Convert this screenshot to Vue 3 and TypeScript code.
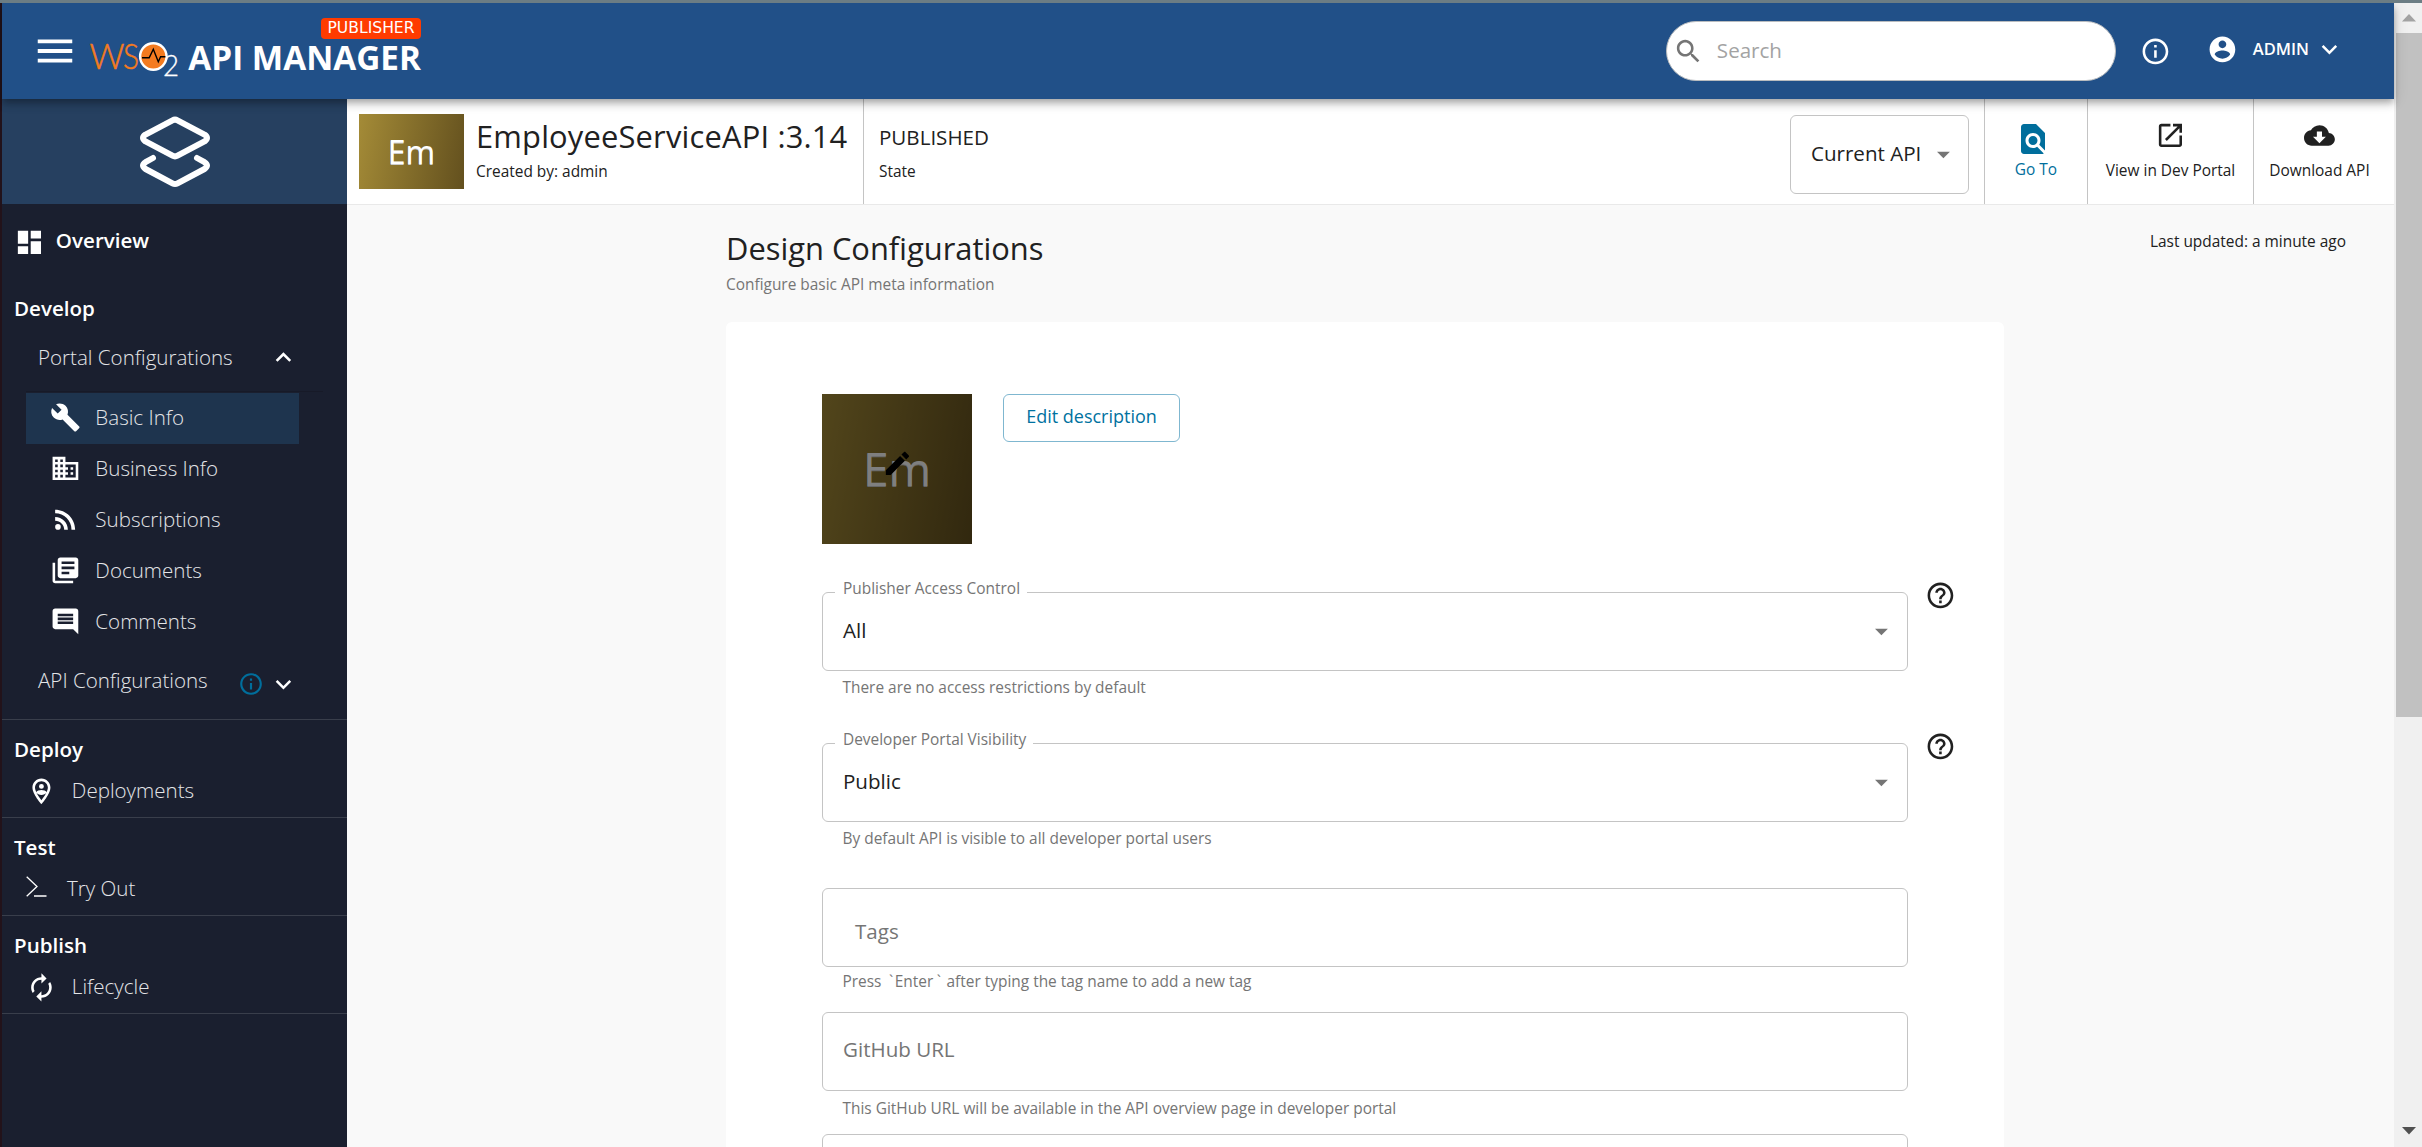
<script setup lang="ts">
interface NavItem {
  label: string
  icon: string
  active?: boolean
}

interface Section {
  key: string
  title: string
  label: string
  icon: string
}

interface Field {
  key: string
  label?: string
  value?: string
  placeholder?: string
  helper?: string
  select?: boolean
}

const icons: Record<string, string> = {
  wrench: 'M22.7 19l-9.1-9.1c.9-2.3.4-5-1.5-6.9-2-2-5-2.4-7.4-1.3L9 6 6 9 1.6 4.7C.4 7.1.9 10.1 2.9 12.1c1.9 1.9 4.6 2.4 6.9 1.5l9.1 9.1c.4.4 1 .4 1.4 0l2.3-2.3c.5-.4.5-1.1.1-1.4z',
  business: 'M12 7V3H2v18h20V7H12zM6 19H4v-2h2v2zm0-4H4v-2h2v2zm0-4H4V9h2v2zm0-4H4V5h2v2zm4 12H8v-2h2v2zm0-4H8v-2h2v2zm0-4H8V9h2v2zm0-4H8V5h2v2zm10 12h-8v-2h2v-2h-2v-2h2v-2h-2V9h8v10zm-2-8h-2v2h2v-2zm0 4h-2v2h2v-2z',
  rss: 'M6.18 15.64a2.18 2.18 0 1 1 0 4.36 2.18 2.18 0 0 1 0-4.36M4 4.44v2.83c7.03 0 12.73 5.7 12.73 12.73h2.83c0-8.59-6.97-15.56-15.56-15.56zm0 5.66v2.83c3.9 0 7.07 3.17 7.07 7.07h2.83c0-5.47-4.43-9.9-9.9-9.9z',
  docs: 'M4 6H2v14c0 1.1.9 2 2 2h14v-2H4V6zm16-4H8c-1.1 0-2 .9-2 2v12c0 1.1.9 2 2 2h12c1.1 0 2-.9 2-2V4c0-1.1-.9-2-2-2zm-1 9H9V9h10v2zm-4 4H9v-2h6v2zm4-8H9V5h10v2z',
  comment: 'M21.99 4c0-1.1-.89-2-1.99-2H4c-1.1 0-2 .9-2 2v12c0 1.1.9 2 2 2h14l4 4-.01-18zM18 14H6v-2h12v2zm0-3H6V9h12v2zm0-3H6V6h12v2z',
  pin: 'M12 2C8.14 2 5 5.14 5 9c0 5.25 7 13 7 13s7-7.75 7-13c0-3.86-3.14-7-7-7zM7 9c0-2.76 2.24-5 5-5s5 2.24 5 5c0 2.88-2.88 7.19-5 9.88C9.92 16.21 7 11.85 7 9zM12 6.200a1.900 1.900 0 1 0 0 3.800a1.900 1.900 0 1 0 0-3.800zM12 10.800c-1.500 0-3.700.600-4 1.900.800 1.300 2.300 2.100 4 2.100s3.200-.800 4-2.100c-.300-1.300-2.500-1.900-4-1.900z',
  renew: 'M12 6v3l4-4-4-4v3c-4.42 0-8 3.58-8 8 0 1.57.46 3.03 1.24 4.26L6.7 14.8c-.45-.83-.7-1.79-.7-2.8 0-3.31 2.69-6 6-6zm6.76 1.74L17.3 9.2c.44.84.7 1.79.7 2.8 0 3.31-2.69 6-6 6v-3l-4 4 4 4v-3c4.42 0 8-3.58 8-8 0-1.57-.46-3.03-1.24-4.26z',
  dashboard: 'M3 13h8V3H3v10zm0 8h8v-6H3v6zm10 0h8V11h-8v10zm0-18v6h8V3h-8z',
  up: 'M12 8l-6 6 1.41 1.41L12 10.83l4.59 4.58L18 14z',
  down: 'M16.59 8.59L12 13.17 7.41 8.59 6 10l6 6 6-6z',
  info: 'M11 7h2v2h-2zm0 4h2v6h-2zm1-9C6.48 2 2 6.48 2 12s4.48 10 10 10 10-4.48 10-10S17.52 2 12 2zm0 18c-4.41 0-8-3.59-8-8s3.59-8 8-8 8 3.59 8 8-3.59 8-8 8z',
  help: 'M11 18h2v-2h-2v2zm1-16C6.48 2 2 6.48 2 12s4.48 10 10 10 10-4.48 10-10S17.52 2 12 2zm0 18c-4.41 0-8-3.59-8-8s3.59-8 8-8 8 3.59 8 8-3.59 8-8 8zm0-14c-2.21 0-4 1.79-4 4h2c0-1.1.9-2 2-2s2 .9 2 2c0 2-3 1.75-3 5h2c0-2.25 3-2.5 3-5 0-2.21-1.79-4-4-4z',
  menu: 'M3 18h18v-2H3v2zm0-5h18v-2H3v2zm0-7v2h18V6H3z',
  search: 'M15.5 14h-.79l-.28-.27C15.41 12.59 16 11.11 16 9.5 16 5.91 13.09 3 9.5 3S3 5.91 3 9.5 5.91 16 9.5 16c1.61 0 3.09-.59 4.23-1.57l.27.28v.79l5 4.99L20.49 19l-4.99-5zm-6 0C7.01 14 5 11.99 5 9.5S7.01 5 9.5 5 14 7.01 14 9.5 11.99 14 9.5 14z',
  account: 'M12 2C6.48 2 2 6.48 2 12s4.48 10 10 10 10-4.48 10-10S17.52 2 12 2zm0 3c1.66 0 3 1.34 3 3s-1.34 3-3 3-3-1.34-3-3 1.34-3 3-3zm0 14.2c-2.5 0-4.71-1.28-6-3.22.03-1.99 4-3.08 6-3.08 1.99 0 5.97 1.09 6 3.08-1.29 1.94-3.5 3.22-6 3.22z',
  find: 'M20 19.59V8l-6-6H6c-1.1 0-1.99.9-1.99 2L4 20c0 1.1.89 2 1.99 2H18c.45 0 .85-.15 1.19-.4l-4.43-4.43c-.8.52-1.74.83-2.76.83-2.76 0-5-2.24-5-5s2.24-5 5-5 5 2.24 5 5c0 1.02-.31 1.96-.83 2.75L20 19.59zM9 13c0 1.66 1.34 3 3 3s3-1.34 3-3-1.34-3-3-3-3 1.34-3 3z',
  launch: 'M19 19H5V5h7V3H5c-1.11 0-2 .9-2 2v14c0 1.1.89 2 2 2h14c1.1 0 2-.9 2-2v-7h-2v7zM14 3v2h3.59l-9.83 9.83 1.41 1.41L19 6.41V10h2V3h-7z',
  cloud: 'M19.35 10.04C18.67 6.59 15.64 4 12 4 9.11 4 6.6 5.64 5.35 8.04 2.34 8.36 0 10.91 0 14c0 3.31 2.69 6 6 6h13c2.76 0 5-2.24 5-5 0-2.64-2.05-4.78-4.65-4.96zM17 13l-5 5-5-5h3V9h4v4h3z',
  edit: 'M3 17.25V21h3.75L17.81 9.94l-3.75-3.75L3 17.25zM20.71 7.04c.39-.39.39-1.02 0-1.41l-2.34-2.34c-.39-.39-1.02-.39-1.41 0l-1.83 1.83 3.75 3.75 1.83-1.83z',
  caret: 'M7 10l5 5 5-5z',
}

const portalItems: NavItem[] = [
  { label: 'Basic Info', icon: 'wrench', active: true },
  { label: 'Business Info', icon: 'business' },
  { label: 'Subscriptions', icon: 'rss' },
  { label: 'Documents', icon: 'docs' },
  { label: 'Comments', icon: 'comment' },
]

const sections: Section[] = [
  { key: 'deploy', title: 'Deploy', label: 'Deployments', icon: 'pin' },
  { key: 'test', title: 'Test', label: 'Try Out', icon: 'terminal' },
  { key: 'publish', title: 'Publish', label: 'Lifecycle', icon: 'renew' },
]

const fields: Field[] = [
  { key: 'access', label: 'Publisher Access Control', value: 'All', helper: 'There are no access restrictions by default', select: true },
  { key: 'visibility', label: 'Developer Portal Visibility', value: 'Public', helper: 'By default API is visible to all developer portal users', select: true },
  { key: 'tags', placeholder: 'Tags', helper: 'Press `Enter` after typing the tag name to add a new tag' },
  { key: 'github', placeholder: 'GitHub URL', helper: 'This GitHub URL will be available in the API overview page in developer portal' },
  { key: 'slack' },
]

// Backticks get their own span so that they can be spaced apart from the word they quote.
const splitTicks = (text: string): string[] => text.split(/(`)/)
</script>

<template>
  <div class="window">
    <div class="window-edge"></div>
    <div class="app">
      <header class="topbar">
        <svg class="menu" viewBox="0 0 24 24"><path :d="icons.menu" /></svg>
        <svg class="wso2" viewBox="0 0 90 40">
          <text x="-0.5" y="30" class="wso2-w" textLength="35" lengthAdjust="spacingAndGlyphs">W</text>
          <text x="33" y="30" class="wso2-w" textLength="16" lengthAdjust="spacingAndGlyphs">S</text>
          <text x="73" y="37" class="wso2-2" textLength="16" lengthAdjust="spacingAndGlyphs">2</text>
          <circle cx="63.3" cy="17.5" r="13.2" fill="#f47b20" stroke="#fff" stroke-width="2.4" />
          <path d="M52 18.8h7.2l4.1-8.6 5 12.6 2.3-5h4.8" fill="none" stroke="#000" stroke-width="1.4" />
        </svg>
        <div class="product">
          <span class="badge">PUBLISHER</span>
          <span class="product-name">API MANAGER</span>
        </div>
        <div class="search">
          <svg class="icon" viewBox="0 0 24 24"><path :d="icons.search" /></svg>
          <span>Search</span>
        </div>
        <svg class="icon top-info" viewBox="0 0 24 24"><path :d="icons.info" /></svg>
        <div class="user">
          <svg class="icon" viewBox="0 0 24 24"><path :d="icons.account" /></svg>
          <span>ADMIN</span>
          <svg class="icon" viewBox="0 0 24 24"><path :d="icons.down" /></svg>
        </div>
      </header>

      <div class="body">
        <nav class="sidebar">
          <div class="brand">
            <svg width="72" height="74" viewBox="0 0 72 74" fill="none" stroke="#fff" stroke-width="6" stroke-linecap="round" stroke-linejoin="round">
              <path d="M33.500 5.300Q36 3.900 38.500 5.300L65.500 19.600Q70.500 23 65.500 26.400L38.500 40.700Q36 42.100 33.500 40.700L6.500 26.400Q1.500 23 6.500 19.600Z" />
              <path d="M14 43L6.500 47.200Q1.500 50.500 6.500 54L33.500 68.300Q36 69.700 38.500 68.300L65.500 54Q70.500 50.500 65.500 47.200L58 43" />
            </svg>
          </div>
          <div class="overview">
            <svg class="icon" viewBox="0 0 24 24"><path :d="icons.dashboard" /></svg>
            <span>Overview</span>
          </div>
          <div class="heading develop">Develop</div>
          <div class="group">
            <span>Portal Configurations</span>
            <svg class="icon" viewBox="0 0 24 24"><path :d="icons.up" /></svg>
          </div>
          <ul class="nav-list">
            <li v-for="item in portalItems" :key="item.label" :class="{ active: item.active }">
              <svg class="icon" viewBox="0 0 24 24"><path :d="icons[item.icon]" /></svg>
              <span>{{ item.label }}</span>
            </li>
          </ul>
          <div class="group api-group">
            <span>API Configurations</span>
            <svg class="info-blue" viewBox="0 0 24 24"><path :d="icons.info" /></svg>
            <svg class="icon" viewBox="0 0 24 24"><path :d="icons.down" /></svg>
          </div>
          <section v-for="s in sections" :key="s.key" class="block">
            <div class="heading">{{ s.title }}</div>
            <div class="entry" :class="s.key">
              <svg v-if="s.icon === 'terminal'" class="terminal" viewBox="0 0 21 21" fill="none" stroke="#fff" stroke-width="1.3">
                <path d="M.7.700L11 10.500.7 20.300M8 20H20.500" />
              </svg>
              <svg v-else class="icon" viewBox="0 0 24 24"><path fill-rule="evenodd" :d="icons[s.icon]" /></svg>
              <span>{{ s.label }}</span>
            </div>
          </section>
        </nav>

        <main class="content">
          <div class="api-bar">
            <div class="thumb">Em</div>
            <div class="api-title">
              <div class="api-name">EmployeeServiceAPI :3.14</div>
              <div class="caption">Created by: admin</div>
            </div>
            <div class="state">
              <div class="state-name">PUBLISHED</div>
              <div class="caption">State</div>
            </div>
            <div class="version">
              <span>Current API</span>
              <svg class="icon" viewBox="0 0 24 24"><path :d="icons.caret" /></svg>
            </div>
            <div class="action goto">
              <svg class="find" viewBox="0 0 24 24"><path :d="icons.find" /></svg>
              <span>Go To</span>
            </div>
            <div class="action portal">
              <svg class="icon" viewBox="0 0 24 24"><path :d="icons.launch" /></svg>
              <span>View in Dev Portal</span>
            </div>
            <div class="action download">
              <svg class="icon" viewBox="0 0 24 24"><path :d="icons.cloud" /></svg>
              <span>Download API</span>
            </div>
          </div>

          <div class="page">
            <div class="page-head">
              <div>
                <h1>Design Configurations</h1>
                <p>Configure basic API meta information</p>
              </div>
              <span class="updated">Last updated: a minute ago</span>
            </div>
            <div class="card">
              <div class="intro">
                <div class="thumb large">
                  <span>Em</span>
                  <div class="overlay">
                    <svg class="icon" viewBox="0 0 24 24"><path :d="icons.edit" /></svg>
                  </div>
                </div>
                <button class="edit">Edit description</button>
              </div>
              <div v-for="f in fields" :key="f.key" class="field" :class="f.key">
                <div class="row">
                  <div class="box">
                    <span v-if="f.label" class="label">{{ f.label }}</span>
                    <span v-if="f.value" class="value">{{ f.value }}</span>
                    <span v-else class="placeholder">{{ f.placeholder }}</span>
                    <svg v-if="f.select" class="icon caret" viewBox="0 0 24 24"><path :d="icons.caret" /></svg>
                  </div>
                  <svg v-if="f.select" class="icon help" viewBox="0 0 24 24"><path :d="icons.help" /></svg>
                </div>
                <div v-if="f.helper" class="helper"><span v-for="(part, i) in splitTicks(f.helper)" :key="i" :class="{ tick: part === '`' }">{{ part }}</span></div>
              </div>
            </div>
          </div>
        </main>
      </div>
    </div>
    <aside class="scrollbar">
      <svg width="14" height="8" viewBox="0 0 14 8"><path d="M7 0l7 7.500H0z" fill="#a3a3a3" /></svg>
      <div class="scroll-thumb"></div>
      <svg class="scroll-down" width="14" height="8" viewBox="0 0 14 8"><path d="M7 7.500L14 0H0z" fill="#505050" /></svg>
    </aside>
  </div>
</template>

<style>
body {
  margin: 0;
  overflow: hidden;
}
</style>

<style scoped>
* {
  box-sizing: border-box;
}

.window {
  display: flex;
  width: 2422px;
  height: 1147px;
  overflow: hidden;
  border-top: 3px solid #6c7d84;
  font-family: 'Open Sans', 'Noto Sans', sans-serif;
  font-size: 20.57px;
  color: #212121;
  background: #f9f9f9;
}

.window-edge {
  flex: none;
  width: 2px;
  background: #22121a;
}

.app {
  display: flex;
  flex-direction: column;
  width: 2392px;
  flex: none;
}

.icon {
  flex: none;
  width: 30.86px;
  height: 30.86px;
  fill: currentColor;
}

.topbar {
  position: relative;
  z-index: 2;
  flex: none;
  display: flex;
  align-items: center;
  height: 96px;
  background: #215088;
  color: #fff;
  box-shadow: 0 3px 6px -1.5px rgba(0, 0, 0, 0.2), 0 6px 7.5px rgba(0, 0, 0, 0.14), 0 1.5px 15px rgba(0, 0, 0, 0.12);
}

.menu {
  width: 46px;
  height: 46px;
  margin-left: 29.5px;
  fill: #fff;
}

.wso2 {
  width: 90px;
  height: 40px;
  margin: 16px 0 0 12px;
  overflow: visible;
}

.wso2-w {
  font: 300 35px Lato, sans-serif;
  fill: #f47b20;
  stroke: #f47b20;
  stroke-width: 0.5px;
}

.wso2-2 {
  font: 300 29px Lato, sans-serif;
  fill: #fff;
  stroke: #fff;
  stroke-width: 0.3px;
}

.product {
  display: flex;
  flex-direction: column;
  align-items: flex-end;
  align-self: flex-start;
  width: 234px;
  margin: 15px 0 0 7.5px;
}

.badge {
  width: 100px;
  height: 21px;
  border-radius: 4px;
  background: #ff3b00;
  font: 15.6px/21px 'DejaVu Sans', sans-serif;
  text-align: center;
}

.product-name {
  margin-top: -2px;
  font-size: 33.3px;
  font-weight: 700;
  line-height: 40px;
  white-space: nowrap;
}

.search {
  display: flex;
  align-items: center;
  width: 450px;
  height: 60px;
  margin-left: 1245px;
  padding-left: 6px;
  border: 1px solid #b9bcbf;
  border-radius: 30px;
  background: #fff;
  color: #757575;
}

.search span {
  margin: -2px 0 0 13px;
  color: #a3a3a3;
}

.top-info {
  margin-left: 24px;
}

.user {
  display: flex;
  align-items: center;
  margin: -3px 0 0 36px;
  font-size: 16.5px;
  font-weight: 600;
}

.user span {
  width: 60px;
  margin: -1px 1px 0 15px;
  white-space: nowrap;
}

.body {
  display: flex;
  flex: 1;
  min-height: 0;
}

.sidebar {
  width: 345px;
  flex: none;
  background: #1a1f2f;
  color: #e4e5e8;
  font-weight: 300;
}

.sidebar .icon {
  color: #fff;
}

.brand {
  display: flex;
  justify-content: center;
  height: 105px;
  padding: 16px 0 0 1px;
  background: #264060;
}

.overview {
  display: flex;
  align-items: center;
  gap: 11px;
  height: 76px;
  padding-left: 12px;
  font-weight: 600;
  color: #fff;
}

.overview span {
  margin-top: -5px;
}

.heading {
  height: 30px;
  margin-top: 14px;
  padding-left: 12px;
  line-height: 30px;
  font-weight: 600;
  color: #fff;
}

.develop {
  margin-top: 13px;
}

.group {
  display: flex;
  align-items: center;
  justify-content: space-between;
  height: 69px;
  width: 297px;
  margin-left: 24px;
  padding: 0 24px 0 12px;
  border-bottom: 1px solid #171a28;
}

.group span {
  margin-top: -1px;
}

.nav-list {
  width: 297px;
  height: 256px;
  margin: 1px 0 0 24px;
  padding: 0;
  list-style: none;
}

.nav-list li {
  display: flex;
  align-items: center;
  gap: 15px;
  width: 273px;
  height: 51px;
  padding: 0 0 2px 23.5px;
}

.nav-list span {
  margin-top: -1px;
}

.active {
  background: #1e344e;
}

.api-group {
  height: 70px;
  border: 0;
}

.api-group span {
  margin: -8px auto 0 0;
}

.info-blue {
  width: 26px;
  height: 26px;
  margin-right: 4.5px;
  fill: #006e9c;
}

.block {
  height: 98px;
  border-top: 1px solid #393e4b;
  display: flow-root;
}

.block:last-child {
  height: 99px;
  border-bottom: 1px solid #393e4b;
}

.entry {
  display: flex;
  align-items: center;
  gap: 15.5px;
  height: 53px;
  padding-left: 23.5px;
}

.entry .icon {
  margin-top: 2px;
}

.entry span {
  margin-top: -2px;
}

.entry.test {
  gap: 20px;
  padding-left: 24px;
}

.terminal {
  width: 21px;
  height: 21px;
  margin-top: -4px;
}

.content {
  flex: 1;
  min-width: 0;
}

.api-bar {
  display: flex;
  height: 106px;
  padding-left: 12px;
  border-bottom: 1px solid #e9e9e9;
  background: #fff;
}

.thumb {
  flex: none;
  width: 105px;
  height: 75px;
  margin-top: 15px;
  background: linear-gradient(100deg, #a48b37 0%, #63501e 100%);
  color: #fff;
  font-size: 32px;
  line-height: 76px;
  text-align: center;
  text-shadow: 0 1px 0 #ccc;
}

.api-title {
  width: 387px;
  margin-left: 12px;
}

.api-name {
  margin-top: 16px;
  font-size: 30.86px;
  line-height: 42px;
  letter-spacing: 0.18px;
  white-space: nowrap;
}

.caption {
  font-size: 15.43px;
  line-height: 24px;
}

.api-title .caption {
  margin-top: 3px;
}

.state {
  width: 200px;
  padding-left: 15px;
  border-left: 1px solid #c4c4c4;
}

.state-name {
  margin-top: 23px;
  line-height: 30px;
}

.state .caption {
  margin-top: 8px;
}

.version {
  display: flex;
  align-items: center;
  justify-content: space-between;
  width: 179px;
  height: 79px;
  margin: 16px 15px 0 auto;
  padding: 0 9px 0 20px;
  border: 1px solid #c4c4c4;
  border-radius: 6px;
}

.version span {
  margin-top: -4px;
}

.version .icon {
  color: #757575;
}

.action {
  display: flex;
  flex-direction: column;
  align-items: center;
  border-left: 1px solid #c4c4c4;
  font-size: 15.43px;
  line-height: 24px;
}

.goto {
  width: 103px;
  color: #006e9c;
}

.find {
  width: 36px;
  height: 36px;
  margin: 22px 6px 0 0;
  fill: currentColor;
}

.goto span {
  margin-top: 1px;
}

.portal {
  width: 166px;
}

.download {
  width: 141px;
  padding-right: 9px;
}

.portal .icon,
.download .icon {
  margin-top: 21px;
}

.portal span,
.download span {
  margin-top: 8px;
}

.page-head {
  display: flex;
  justify-content: space-between;
  height: 117px;
  padding: 21px 48px 0 379px;
}

h1 {
  margin: 0;
  font-size: 30.86px;
  font-weight: 400;
  line-height: 44px;
}

p {
  margin: 3px 0 0;
  font-size: 15.43px;
  line-height: 24px;
  color: #757575;
}

.updated {
  margin-top: 4px;
  font-size: 15.43px;
  line-height: 24px;
}

.card {
  width: 1278px;
  height: 900px;
  margin-left: 379px;
  padding: 72px 0 0 96px;
  border-radius: 6px;
  background: #fff;
}

.intro {
  display: flex;
  gap: 31px;
  height: 150px;
}

.thumb.large {
  position: relative;
  width: 150px;
  height: 150px;
  margin: 0;
  font-size: 46px;
  line-height: 148px;
}

.overlay {
  position: absolute;
  inset: 0;
  display: flex;
  align-items: center;
  justify-content: center;
  padding-bottom: 11px;
  background: rgba(0, 0, 0, 0.5);
  color: #000;
}

.edit {
  width: 177px;
  height: 48px;
  padding: 0 0 5px;
  border: 1px solid #7fb7d0;
  border-radius: 6px;
  background: #fff;
  color: #0072a0;
  font: 18px 'Open Sans', sans-serif;
}

.field.access {
  margin-top: 48px;
}

.field.visibility {
  margin-top: 43px;
}

.field.tags {
  margin-top: 37px;
}

.field.github {
  margin-top: 18px;
}

.field.slack {
  margin-top: 13px;
}

.row {
  display: flex;
}

.box {
  position: relative;
  display: flex;
  align-items: center;
  width: 1086px;
  height: 79px;
  padding: 0 10px 4px 20px;
  border: 1px solid #c4c4c4;
  border-radius: 6px;
}

.label {
  position: absolute;
  top: -16px;
  left: 12px;
  padding: 0 7px 0 8px;
  background: #fff;
  color: #757575;
  font-size: 15.43px;
  line-height: 24px;
}

.placeholder {
  color: #757575;
  margin-top: -2px;
}

.tags .placeholder {
  margin: 11px 0 0 12px;
}

.caret {
  margin: 4px 0 0 auto;
  color: #757575;
}

.help {
  margin: -12px 0 0 17px;
}

.helper {
  margin: 5px 0 0 20.5px;
  color: #757575;
  font-size: 15.43px;
  line-height: 24px;
  white-space: pre;
}

.tick {
  padding: 0 1.5px 0 3.5px;
}

.tags .helper {
  margin-top: 3px;
}

.github .helper {
  margin-top: 6px;
}

.scrollbar {
  display: flex;
  flex-direction: column;
  align-items: center;
  flex: none;
  width: 28px;
  padding: 11px 0 12px 2px;
  background: #f0f0f0;
}

.scrollbar svg {
  flex: none;
}

.scroll-thumb {
  flex: none;
  width: 26px;
  height: 684px;
  margin-top: 11px;
  background: #c1c1c1;
}

.scroll-down {
  margin-top: auto;
}
</style>
